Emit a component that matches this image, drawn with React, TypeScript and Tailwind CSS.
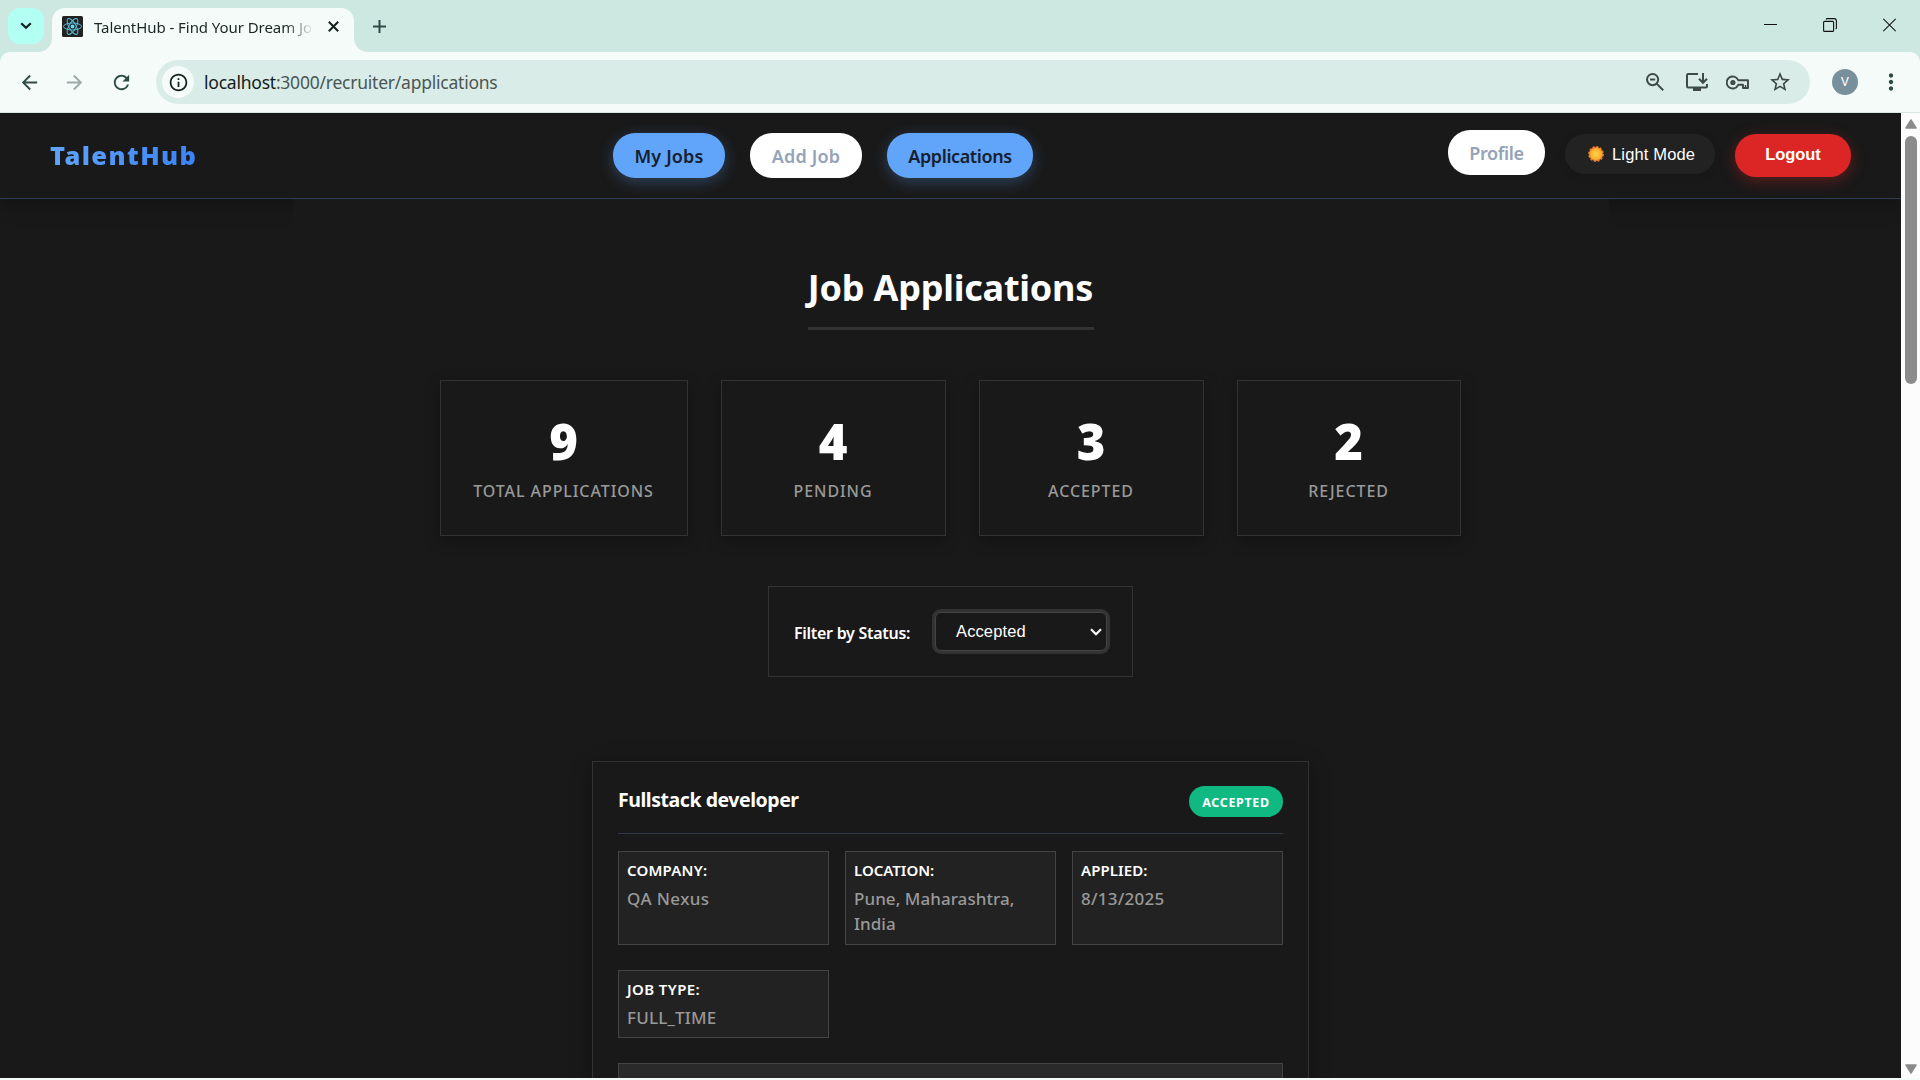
import React from "react";
import {
  MdArrowBack,
  MdArrowForward,
  MdRefresh,
  MdInfoOutline,
  MdStarBorder,
  MdMoreVert,
} from "react-icons/md";

function ReactLogo() {
  return (
    <svg width="21" height="21" viewBox="0 0 21 21" className="shrink-0">
      <rect width="21" height="21" rx="1.5" fill="#222222" />
      <g fill="none" stroke="#56bdd6" strokeWidth="1">
        <ellipse cx="10.5" cy="10.5" rx="9" ry="3.5" />
        <ellipse cx="10.5" cy="10.5" rx="9" ry="3.5" transform="rotate(60 10.5 10.5)" />
        <ellipse cx="10.5" cy="10.5" rx="9" ry="3.5" transform="rotate(120 10.5 10.5)" />
      </g>
      <circle cx="10.5" cy="10.5" r="1.9" fill="#61dafb" />
    </svg>
  );
}

function TabStrip() {
  return (
    <div className="flex h-[52px] shrink-0 items-start bg-[#cce8e1]">
      <div className="flex h-[52px] w-[52px] items-start pt-2 pl-2">
        <button className="flex h-9 w-9 items-center justify-center rounded-xl bg-[#b2fff3]">
          <svg width="12" height="8" viewBox="0 0 12 8" fill="none" stroke="#14211f" strokeWidth="2.2">
            <path d="M1.2 1.2 6 5.8l4.8-4.6" />
          </svg>
        </button>
      </div>
      <div className="relative mt-2 flex h-11 w-[302px] items-start rounded-t-[13px] bg-[#f5fbf9] pt-2 pl-[10px]">
        <svg className="absolute bottom-0 -left-[14px]" width="14" height="14" viewBox="0 0 14 14">
          <path d="M14 0v14H0A14 14 0 0 0 14 0Z" fill="#f5fbf9" />
        </svg>
        <svg className="absolute -right-[14px] bottom-0" width="14" height="14" viewBox="0 0 14 14">
          <path d="M0 0v14h14A14 14 0 0 1 0 0Z" fill="#f5fbf9" />
        </svg>
        <ReactLogo />
        <span className="ml-[11px] w-[217px] overflow-hidden bg-linear-to-r from-[#1b2523] from-88% to-[#1b2523]/10 bg-clip-text text-[15px] leading-[22px] tracking-[-0.06px] whitespace-nowrap text-transparent">
          TalentHub - Find Your Dream Jo
        </span>
        <svg className="mt-[5px] ml-[17px]" width="11" height="11" viewBox="0 0 11 11" stroke="#14211f" strokeWidth="2">
          <path d="m.8.8 9.4 9.4M10.2.8.8 10.2" />
        </svg>
      </div>
      <svg className="mt-5 ml-[19px]" width="13" height="13" viewBox="0 0 13 13" stroke="#2f4b46" strokeWidth="2">
        <path d="M6.5 0v13M0 6.5h13" />
      </svg>
      <div className="mt-[18px] mr-6 ml-auto flex items-center gap-[46px]">
        <svg width="13" height="14" viewBox="0 0 13 14" stroke="#111" strokeWidth="1">
          <path d="M0 6.5h13" />
        </svg>
        <svg width="14" height="14" viewBox="0 0 14 14" fill="none" stroke="#111" strokeWidth="1.1">
          <rect x=".6" y="3.4" width="10" height="10" rx="1" />
          <path d="M3 1.3C3.3 .9 3.7 .6 4.2 .6H11a2.4 2.4 0 0 1 2.4 2.4v6.8c0 .5-.3.9-.7 1.2" />
        </svg>
        <svg width="13" height="14" viewBox="0 0 13 14" stroke="#111" strokeWidth="1.1">
          <path d="m.3.8 12.4 12.4M12.7.8.3 13.2" />
        </svg>
      </div>
    </div>
  );
}

function Toolbar() {
  return (
    <div className="shrink-0 bg-[#cce8e1]">
      <div className="flex h-[61px] items-start rounded-t-[10px] border-b border-[#d8e5e2] bg-[#f5fbf9] pt-2">
        <div className="flex h-11 items-center pl-[18px] text-[23px] text-[#2f4b46]">
          <MdArrowBack />
          <MdArrowForward className="ml-[22px] text-[#9caaa7]" />
          <MdRefresh className="ml-[24px]" />
        </div>
        <div className="ml-[23px] flex h-11 w-[1654px] shrink-0 items-center rounded-full bg-[#daece7]">
          <div className="ml-[6px] flex h-8 w-8 items-center justify-center rounded-full bg-[#f5fbf9]">
            <MdInfoOutline className="text-[21px] text-[#14211f]" />
          </div>
          <span className="ml-[10px] text-[17.5px] tracking-[-0.23px] whitespace-nowrap text-[#4a5654]">
            <span className="text-[#121c1a]">localhost</span>:3000/recruiter/applications
          </span>
          <div className="mr-[18px] ml-auto flex items-center text-[#3d4a47]">
            <svg width="18" height="18" viewBox="0 0 18 18" fill="none" stroke="currentColor" strokeWidth="2">
              <circle cx="6.6" cy="6.6" r="5.6" />
              <path d="m10.6 10.6 6.6 6.6M4 6.6h5.2" />
            </svg>
            <svg className="ml-[22px]" width="22" height="18" viewBox="0 0 22 18" fill="none" stroke="currentColor" strokeWidth="2">
              <path d="M12 1H2.2C1.5 1 1 1.5 1 2.2v11.1c0 .7.5 1.2 1.2 1.2h17.6c.7 0 1.2-.5 1.2-1.2V11M17 0v9.5M13 5.8l4 4 4-4" />
              <path d="M7 16.5h8" strokeWidth="3" />
            </svg>
            <svg className="ml-[18px]" width="24" height="15" viewBox="0 0 24 15" fill="none" stroke="currentColor" strokeWidth="1.9">
              <path d="M12.2 5.2A6 6 0 1 0 12.2 9.8H17v3.2h5V5.2Z" strokeLinejoin="round" />
              <path d="M19.5 10v3" strokeWidth="1.5" />
              <circle cx="6.9" cy="7.5" r="2.6" fill="currentColor" stroke="none" />
            </svg>
            <MdStarBorder className="ml-[18px] text-[24px]" />
          </div>
        </div>
        <div className="mt-[9px] ml-[22px] flex h-[26px] w-[26px] shrink-0 items-center justify-center rounded-full bg-[#78909c] font-['Roboto'] text-[13px] text-white">
          V
        </div>
        <MdMoreVert className="mt-[9px] ml-[20px] text-[26px] text-[#2f4b46]" />
      </div>
    </div>
  );
}

function NavBar() {
  return (
    <nav className="flex h-[86px] shrink-0 items-start border-b border-[#2e3d55] bg-[#191919] pl-[50px] shadow-[0_4px_20px_rgba(0,0,0,0.3)]">
      <div className="mt-5 w-[563px] leading-[45px]">
        <span className="inline-block bg-linear-to-r from-[#60a5fa] to-[#3b82f6] bg-clip-text text-[25.5px] font-black tracking-[1.4px] text-transparent">
          TalentHub
        </span>
      </div>
      <div className="mt-5 flex gap-[25px] text-[18px] leading-[47px] font-semibold whitespace-nowrap text-[#16202f]">
        <a className="h-[45px] w-28 rounded-[22px] bg-[#60a5fa] text-center tracking-[0.15px] shadow-[0_4px_15px_rgba(96,165,250,0.3)]">
          My Jobs
        </a>
        <a className="h-[45px] w-28 rounded-[22px] bg-white text-center tracking-[0.2px] text-[#94a3b8]">Add Job</a>
        <a className="h-[45px] w-[146px] rounded-[22px] bg-[#60a5fa] text-center tracking-[-0.4px] shadow-[0_4px_15px_rgba(96,165,250,0.3)]">
          Applications
        </a>
      </div>
      <div className="mr-[50px] ml-auto flex items-start">
        <a className="mt-[17px] h-[45px] w-[97px] rounded-[22px] bg-white text-center text-[18px] leading-[47px] font-semibold tracking-[-0.35px] text-[#94a3b8]">
          Profile
        </a>
        <button className="mt-[21px] ml-5 flex h-10 w-[150px] items-center rounded-[20px] bg-[#222222] pl-[23px] font-['Liberation_Sans'] text-[16.5px] text-white shadow-[0_2px_8px_rgba(0,0,0,0.1)]">
          <svg width="16" height="16" viewBox="0 0 16 16">
            <defs>
              <radialGradient id="sun">
                <stop offset="0" stopColor="#ffd540" />
                <stop offset="1" stopColor="#f6ab30" />
              </radialGradient>
            </defs>
            <circle cx="8" cy="8" r="7" fill="#ee7f2b" stroke="#ee7f2b" strokeWidth="1.8" strokeDasharray="2.2 1.465" />
            <circle cx="8" cy="8" r="6" fill="url(#sun)" />
          </svg>
          <span className="ml-[8px] tracking-[0.15px] whitespace-nowrap">Light Mode</span>
        </button>
        <button className="mt-[21px] ml-5 h-[43px] w-[116px] rounded-[21px] bg-[#dc2626] pb-[3px] font-['Liberation_Sans'] text-[16.5px] font-bold tracking-[-0.05px] text-white shadow-[0_4px_15px_rgba(220,38,38,0.35)]">
          Logout
        </button>
      </div>
    </nav>
  );
}

const stats = [
  { value: "9", label: "TOTAL APPLICATIONS", width: "w-[248px]" },
  { value: "4", label: "PENDING", width: "w-[225px]" },
  { value: "3", label: "ACCEPTED", width: "w-[225px]" },
  { value: "2", label: "REJECTED", width: "w-[224px]" },
];

function Stats() {
  return (
    <div className="mt-[50px] flex h-[156px] w-[1022px] shrink-0 gap-[33px]">
      {stats.map((s) => (
        <div
          key={s.label}
          className={`${s.width} flex h-[156px] flex-col items-center border border-[#333333] bg-[#191919] pt-9 shadow-[0_4px_15px_rgba(0,0,0,0.3)]`}
        >
          <div className="text-[49px] leading-[49px] font-black text-white">{s.value}</div>
          <div className="mt-[13px] text-[16px] leading-6 font-medium tracking-[0.92px] whitespace-nowrap text-[#999999]">
            {s.label}
          </div>
        </div>
      ))}
    </div>
  );
}

function Filter() {
  return (
    <div className="mt-[50px] flex h-[91px] w-[365px] shrink-0 items-start border border-[#333333] pl-[25px]">
      <span className="mt-[34px] w-[141px] text-[16px] leading-6 font-semibold tracking-[-0.28px] whitespace-nowrap text-white">
        Filter by Status:
      </span>
      <div className="mt-[25px] flex h-[39px] w-[172px] items-center rounded-[6px] border border-[#444444] bg-[#191919] pr-[4px] pl-[20px] ring-3 ring-[#333333]">
        <span className="font-['Liberation_Sans'] text-[16.5px] tracking-[0.12px] text-white">Accepted</span>
        <svg className="mt-px ml-auto" width="12" height="8" viewBox="0 0 12 8" fill="none" stroke="#ffffff" strokeWidth="2.2">
          <path d="M1 1.2 6 6.2l5-5" />
        </svg>
      </div>
    </div>
  );
}

function Field({ label, children, labelClass, valueClass }: {
  label: string;
  children: React.ReactNode;
  labelClass: string;
  valueClass: string;
}) {
  return (
    <div className="border border-[#444444] bg-[#222222] px-2 pt-[6px]">
      <div className={`${labelClass} text-[15px] leading-6 font-semibold text-white`}>{label}</div>
      <div className={`${valueClass} mt-[4px] text-[17px] leading-[25px] font-medium text-[#999999]`}>{children}</div>
    </div>
  );
}

function ApplicationCard() {
  return (
    <section className="mt-[84px] flex h-[400px] w-[717px] shrink-0 flex-col border border-[#333333] px-[25px] shadow-[0_4px_20px_rgba(0,0,0,0.3)]">
      <header className="flex h-[72px] shrink-0 items-start justify-between border-b border-[#334155]/80 pt-6">
        <h2 className="text-[19.5px] leading-7 font-bold tracking-[-0.45px] text-white">Fullstack developer</h2>
        <span className="h-[31px] w-[94px] rounded-full bg-[#10b981] pt-px text-center text-[12.5px] leading-[31px] font-bold tracking-[0.65px] text-white">
          ACCEPTED
        </span>
      </header>
      <div className="mt-[17px] grid h-[94px] shrink-0 grid-cols-3 gap-4">
        <Field label="COMPANY:" labelClass="tracking-[0.2px]" valueClass="tracking-[0.4px]">QA Nexus</Field>
        <Field label="LOCATION:" labelClass="tracking-[0px]" valueClass="tracking-[0.05px]">Pune, Maharashtra, India</Field>
        <Field label="APPLIED:" labelClass="tracking-[0.1px]" valueClass="tracking-[0.25px]">8/13/2025</Field>
      </div>
      <div className="mt-[25px] grid h-[68px] shrink-0 grid-cols-3 gap-4">
        <Field label="JOB TYPE:" labelClass="tracking-[0.4px]" valueClass="tracking-[0.2px]">FULL_TIME</Field>
      </div>
      <div className="mt-[25px] h-24 border border-[#444444] bg-[#2a2a2a]" />
    </section>
  );
}

function Scrollbar() {
  return (
    <div className="flex w-[19px] flex-col items-center justify-between bg-[#fcfcfc] pt-[6px] pr-[3px] pb-[4px] pl-[4px]">
      <div className="flex flex-col items-center gap-[7px]">
        <svg width="12" height="10" viewBox="0 0 12 10">
          <path d="M6 1 11 9H1Z" fill="#8b8b8b" stroke="#8b8b8b" strokeWidth="1.5" strokeLinejoin="round" />
        </svg>
        <div className="h-[248px] w-3 rounded-full bg-[#8b8b8b]" />
      </div>
      <svg width="12" height="10" viewBox="0 0 12 10">
        <path d="M6 9 1 1h10Z" fill="#8b8b8b" stroke="#8b8b8b" strokeWidth="1.5" strokeLinejoin="round" />
      </svg>
    </div>
  );
}

export default function App() {
  return (
    <div className="flex h-[1080px] w-[1920px] flex-col overflow-hidden bg-[#f5fbf9] font-['Noto_Sans',sans-serif]">
      <TabStrip />
      <Toolbar />
      <div className="flex h-[965px] shrink-0">
        <div className="flex w-[1901px] flex-col items-center overflow-hidden bg-[#191919]">
          <div className="w-full shrink-0">
            <NavBar />
          </div>
          <main className="relative flex h-[879px] w-[1316px] shrink-0 flex-col items-center bg-[#191919] pt-[61px]">
            <h1 className="h-[70px] w-[286px] shrink-0 border-b-3 border-[#333333] text-center text-[36px] leading-[55px] font-bold tracking-[-0.23px] whitespace-nowrap text-white">
              Job Applications
            </h1>
            <Stats />
            <Filter />
            <ApplicationCard />
          </main>
        </div>
        <Scrollbar />
      </div>
    </div>
  );
}
